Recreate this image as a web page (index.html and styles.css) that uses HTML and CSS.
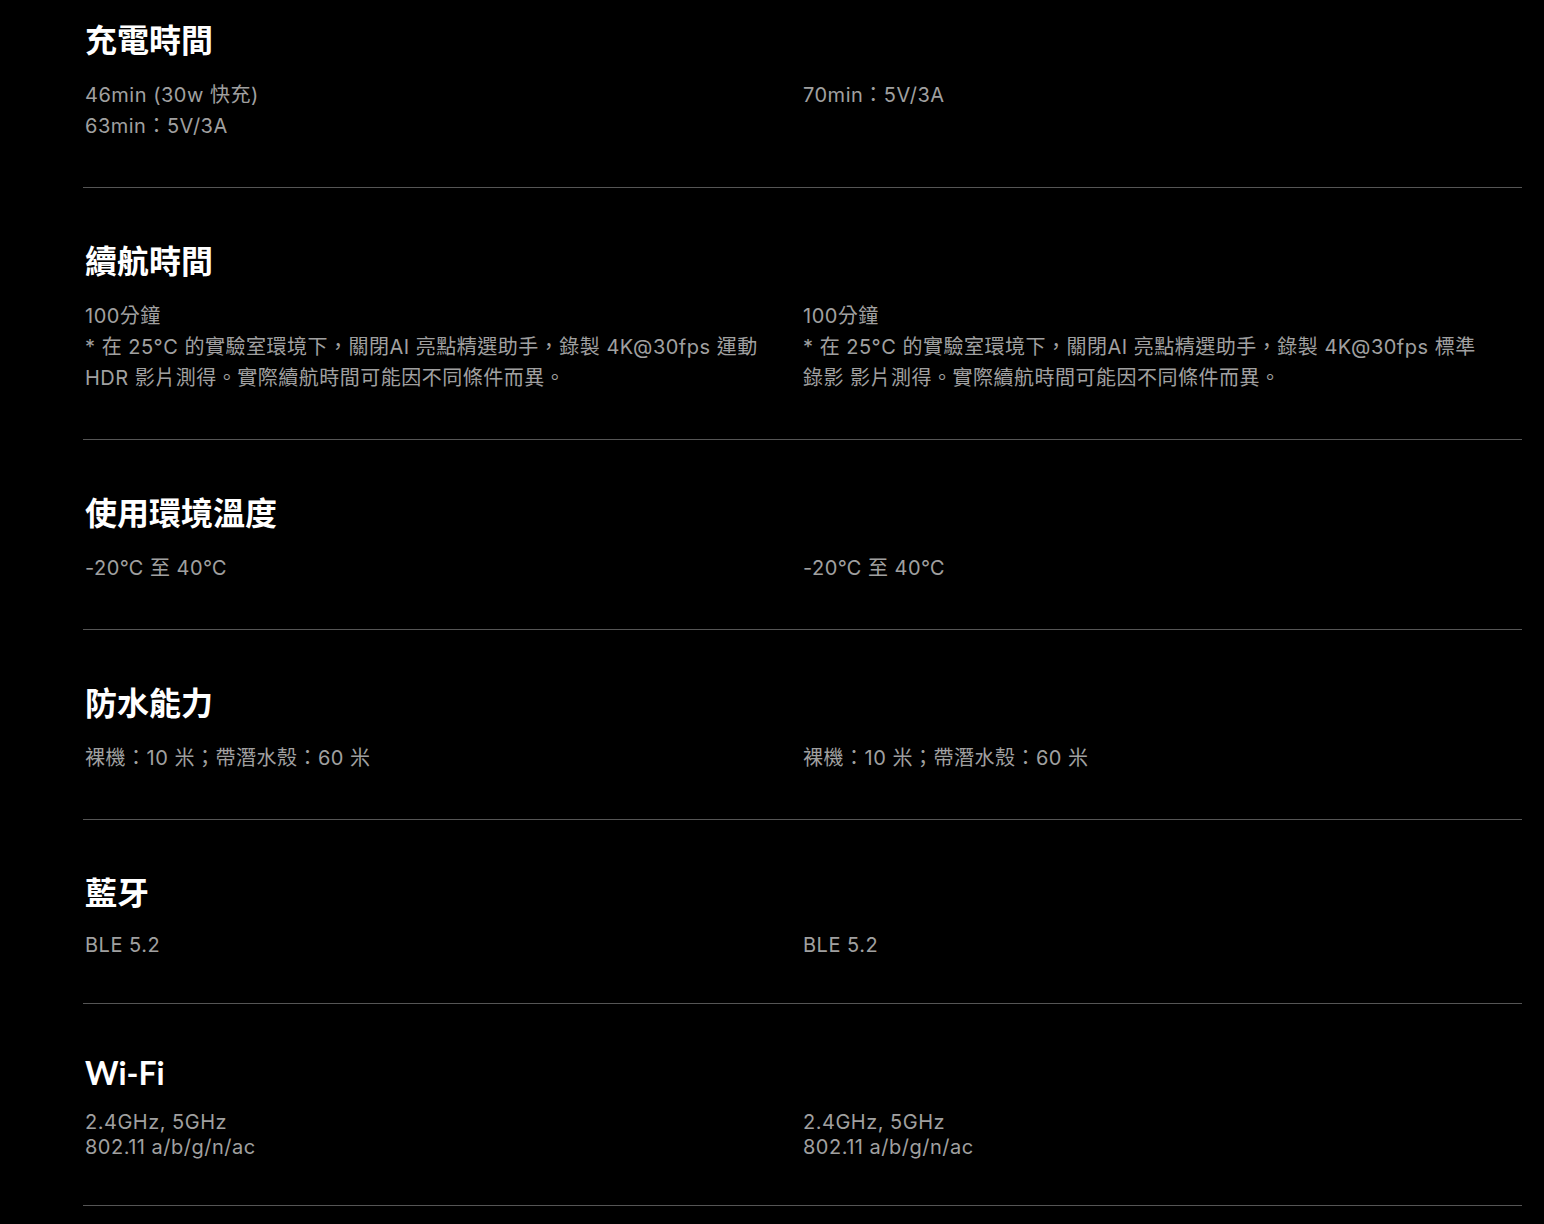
FILE: index.html
```html
<!DOCTYPE html>
<html lang="zh-Hant">

<head>
    <meta charset="UTF-8" />
    <meta name="viewport" content="width=device-width, initial-scale=1.0" />
    <link rel="stylesheet" href="styles.css">
    <title>規格</title>
</head>

<body>

    <!-- spec table, page scrolled a bit so the first row is cut off -->
    <div class="specs">

        <section class="spec-row">
            <h3 class="spec-title">充電時間</h3>
            <div class="spec-values">
                <p class="spec-value">46min (30w 快充)<br>63min：5V/3A</p>
                <p class="spec-value">70min：5V/3A</p>
            </div>
        </section>

        <section class="spec-row">
            <h3 class="spec-title">續航時間</h3>
            <div class="spec-values">
                <p class="spec-value">100分鐘<br>* 在 25°C 的實驗室環境下，關閉AI 亮點精選助手，錄製 4K@30fps 運動 HDR 影片測得。實際續航時間可能因不同條件而異。</p>
                <p class="spec-value">100分鐘<br>* 在 25°C 的實驗室環境下，關閉AI 亮點精選助手，錄製 4K@30fps 標準錄影 影片測得。實際續航時間可能因不同條件而異。</p>
            </div>
        </section>

        <section class="spec-row">
            <h3 class="spec-title">使用環境溫度</h3>
            <div class="spec-values">
                <p class="spec-value">-20℃ 至 40℃</p>
                <p class="spec-value">-20℃ 至 40℃</p>
            </div>
        </section>

        <section class="spec-row">
            <h3 class="spec-title">防水能力</h3>
            <div class="spec-values">
                <p class="spec-value">裸機：10 米；帶潛水殼：60 米</p>
                <p class="spec-value">裸機：10 米；帶潛水殼：60 米</p>
            </div>
        </section>

        <section class="spec-row">
            <h3 class="spec-title">藍牙</h3>
            <div class="spec-values">
                <p class="spec-value latin">BLE 5.2</p>
                <p class="spec-value latin">BLE 5.2</p>
            </div>
        </section>

        <section class="spec-row">
            <h3 class="spec-title latin">Wi-Fi</h3>
            <div class="spec-values">
                <p class="spec-value latin">2.4GHz, 5GHz<br>802.11 a/b/g/n/ac</p>
                <p class="spec-value latin">2.4GHz, 5GHz<br>802.11 a/b/g/n/ac</p>
            </div>
        </section>

    </div>

</body>

</html>
```

FILE: styles.css
```css
:root {
    --bg: #000;
    --title: #fff;
    --text: #a0a0a0;
    --line: #555;
}

* {
    box-sizing: border-box;
}

body {
    background-color: var(--bg);
    font-family: Lato, "Noto Sans CJK TC", sans-serif;
    margin: 0;
    overflow: hidden;
    height: 100vh;
}

.specs {
    /* page is scrolled, first row starts above the viewport */
    margin: -33px 0 0 83px;
    width: 1439px;
}

.spec-row {
    padding: 51px 0 45px 2px;
    border-bottom: 1px solid var(--line);
}

.spec-title {
    color: var(--title);
    font-size: 32px;
    font-weight: 700;
    line-height: 44px;
    margin: 0 0 18px;
}

.spec-title.latin {
    /* no CJK glyphs, so the line box is smaller */
    line-height: 36px;
    margin-bottom: 19px;
}

.spec-values {
    display: grid;
    grid-template-columns: 690px 690px;
    column-gap: 28px;
}

.spec-value {
    color: var(--text);
    font-family: Inter, "Noto Sans CJK TC", sans-serif;
    font-size: 20px;
    letter-spacing: 0.5px;
    line-height: 31px;
    margin: 0;
}

.spec-value.latin {
    line-height: 25px;
}
```
